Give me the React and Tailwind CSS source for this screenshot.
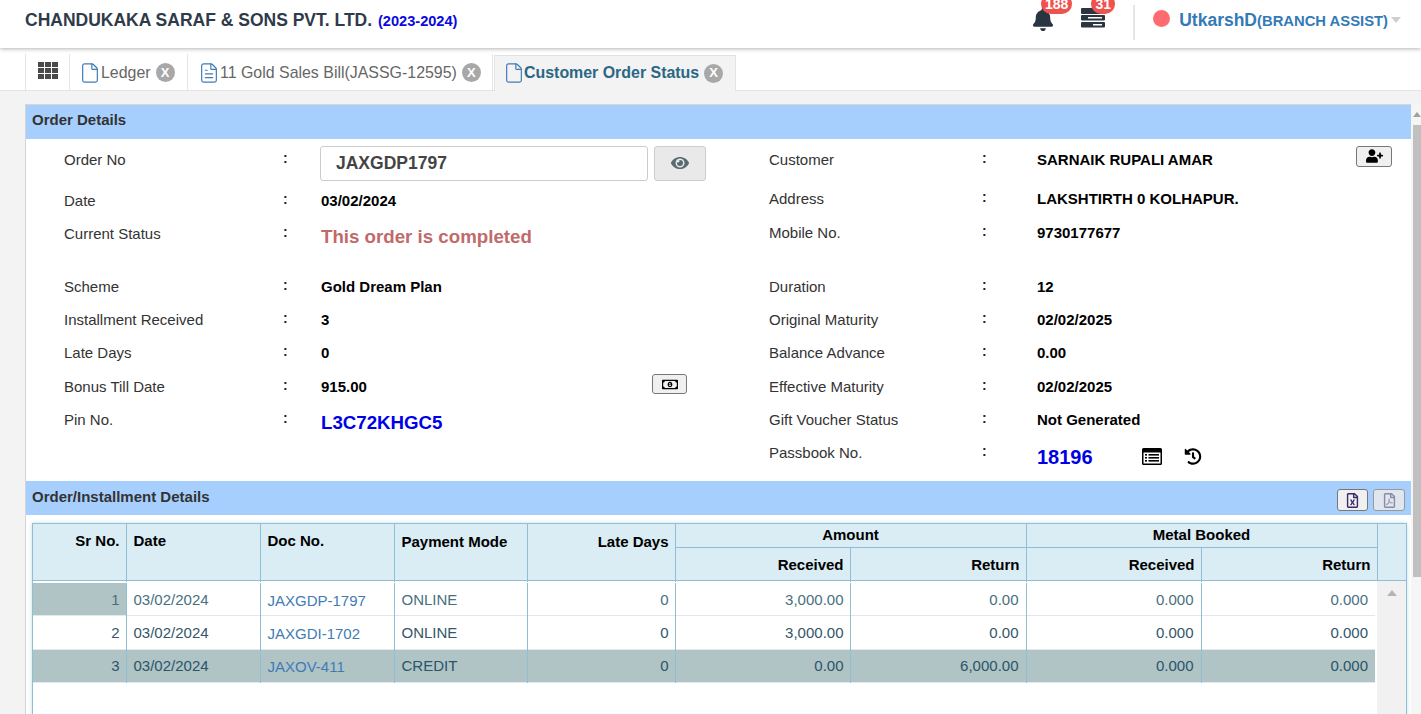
import React from "react";
import { FaBell, FaEye, FaUserPlus, FaRegMoneyBillAlt, FaHistory, FaRegFileExcel, FaRegFilePdf } from "react-icons/fa";
import { File, FileText } from "lucide-react";

const font = { fontFamily: '"Liberation Sans", Arial, sans-serif' };

function Row({ h, label, labelW, colonW, children, mt = "" }) {
  return (
    <div className={`flex items-center ${h} ${mt}`}>
      <div className={`${labelW} text-[15px] text-[#333] shrink-0`}>{label}</div>
      <div className={`${colonW} shrink-0 text-[14px] font-bold text-[#222] -translate-y-[2px] -translate-x-[2px]`}>:</div>
      <div className="flex-1 min-w-0 text-[15px] font-bold text-black">{children}</div>
    </div>
  );
}

function LRow(p) {
  return <Row labelW="w-[221px]" colonW="w-[36px]" {...p} />;
}
function RRow(p) {
  return <Row labelW="w-[215px]" colonW="w-[53px]" {...p} />;
}

function Tab({ w, icon, label, active }) {
  return (
    <div
      className={`${w} h-[36px] flex items-center shrink-0 border-r ${
        active ? "bg-[#f3f3f3] border-t border-l -mb-px pl-[8px] pb-[1px] border-[#e3e3e3]" : "mr-px pl-[9px] pt-[1px] border-[#e5e5e5]"
      }`}
    >
      {icon}
      <span className={`text-[15.930px] whitespace-nowrap ${active ? "-ml-[1px] font-bold text-[#2a6785]" : "text-[#666]"}`}>{label}</span>
      <span className="ml-[5px] w-[19px] h-[19px] rounded-full bg-[#a8a8a8] text-white text-[13px] font-bold flex items-center justify-center shrink-0">X</span>
    </div>
  );
}

const headCols = [93, 134, 134, 133, 148, 175, 176, 175, 176];
const bodyCols = [93, 134, 134, 133, 148, 175, 176, 175, 174];
const rows = [
  ["1", "JAXGDP-1797", "ONLINE", "3,000.00", "0.00"],
  ["2", "JAXGDI-1702", "ONLINE", "3,000.00", "0.00"],
  ["3", "JAXOV-411", "CREDIT", "0.00", "6,000.00"],
];
const rowText = ["text-[#47707f]", "text-[#33566a]", "text-[#2a5568]"];

function BodyRow({ r, i }) {
  const sel = i === 2;
  const base = `text-[15px] pt-[2px] ${rowText[i]}`;
  const tdL = `border-r border-[#8fbfd4] pl-[7px] pr-[5px] ${base}`;
  const tdR = `border-r border-[#8fbfd4] pl-[5px] pr-[6px] text-right ${base}`;
  const tdR2 = `border-r border-[#8fbfd4] pl-[5px] pr-[7px] text-right ${base}`;
  return (
    <tr className={`${i === 1 ? "h-[34px]" : i === 0 ? "h-[32px]" : "h-[33px]"} ${sel ? "bg-[#b0c3c5]" : ""} border-b border-[#dfeaef]`}>
      <td className={`${tdR} ${i === 0 ? "bg-[#b0c3c5]" : ""}`}>{r[0]}</td>
      <td className={tdL}>03/02/2024</td>
      <td className={tdL}><span className="relative top-[1px] text-[#3f7cb5]">{r[1]}</span></td>
      <td className={tdL}>{r[2]}</td>
      <td className={tdR}>0</td>
      <td className={tdR}>{r[3]}</td>
      <td className={tdR2}>{r[4]}</td>
      <td className={tdR2}>0.000</td>
      <td className={`pl-[5px] pr-[7px] text-right ${base}`}>0.000</td>
    </tr>
  );
}

function Colgroup({ cols }) {
  return (
    <colgroup>
      {cols.map((c, i) => (
        <col key={i} style={{ width: c }} />
      ))}
    </colgroup>
  );
}

function GridIcon() {
  const xs = [0, 7, 14];
  const ys = [0, 6, 12];
  return (
    <svg width="20" height="17" viewBox="0 0 20 17" fill="#4a4a4a" className="-mt-[3px]">
      {ys.map((y) => xs.map((x) => <rect key={`${x}-${y}`} x={x} y={y} width="6" height="5" />))}
    </svg>
  );
}

function ListWindowIcon() {
  return (
    <svg width="20" height="17" viewBox="0 0 20 17" fill="#000">
      <path fillRule="evenodd" d="M1.5 0h17A1.5 1.5 0 0 1 20 1.500v14a1.500 1.500 0 0 1-1.500 1.500h-17A1.500 1.500 0 0 1 0 15.500v-14A1.500 1.500 0 0 1 1.500 0zM1.500 4.500v11h17v-11z" />
      <rect x="3" y="6" width="2" height="1.600" />
      <rect x="3" y="9" width="2" height="1.600" />
      <rect x="3" y="12" width="2" height="1.600" />
      <rect x="6.500" y="6" width="10.500" height="1.600" />
      <rect x="6.500" y="9" width="10.500" height="1.600" />
      <rect x="6.500" y="12" width="10.500" height="1.600" />
    </svg>
  );
}

const tabIcon = "w-[22px] h-[22px] text-[#3f7cb5] shrink-0";

export default function App() {
  const th = "border-r border-[#8fbfd4] px-[6px] text-[15px] font-bold text-black";
  const thL = "border-r border-[#8fbfd4] pl-[7px] pr-[5px] text-[15px] font-bold text-black";
  return (
    <div className="w-[1421px] h-[714px] overflow-hidden bg-[#f3f3f3] flex flex-col" style={font}>
      {/* header */}
      <header className="h-[48px] shrink-0 bg-white shadow-[0_1px_4px_rgba(0,0,0,0.3)] relative z-10 flex items-start pl-[25px]">
        <div className="pt-[7px] text-[17.5px] font-bold text-[#2f3a4a] whitespace-nowrap">
          CHANDUKAKA SARAF &amp; SONS PVT. LTD. <span className="text-[14.600px] text-[#0a0ae0] ml-[1px]">(2023-2024)</span>
        </div>
        <div className="ml-auto flex items-start h-full">
          <div className="relative mt-[8px] w-[22px] h-[22px]">
            <FaBell className="w-[22px] h-[23px] text-[#2b3542]" />
            <span className="absolute left-[9px] -top-[14px] w-[31px] h-[20px] rounded-[10px] bg-[#ef5350] text-white text-[14px] font-bold flex items-center justify-center">188</span>
          </div>
          <div className="relative ml-[27px] mt-[8px] w-[24px] h-[20px]">
            <svg viewBox="0 0 24 20" className="w-[24px] h-[20px]" fill="#2b3542">
              <rect x="0" y="0" width="24" height="6" rx="1" />
              <rect x="0" y="7" width="24" height="5.500" rx="1" />
              <rect x="0" y="14" width="24" height="5.500" rx="1" />
              <rect x="7" y="9" width="14" height="1.500" fill="#fff" />
              <rect x="12" y="16" width="9" height="1.500" fill="#fff" />
            </svg>
            <span className="absolute left-[10px] -top-[14px] w-[24px] h-[20px] rounded-[10px] bg-[#ef5350] text-white text-[14px] font-bold flex items-center justify-center">31</span>
          </div>
          <div className="ml-[28px] mt-[5px] w-[2px] h-[35px] bg-[#e6e6e6]" />
          <div className="ml-[18px] mt-[10px] w-[17px] h-[17px] rounded-full bg-[#ff6b70]" />
          <div className="ml-[9px] mt-[7px] flex items-baseline whitespace-nowrap text-[#337ab7] font-bold">
            <span className="text-[17.500px]">UtkarshD</span>
            <span className="text-[14.800px]">(BRANCH ASSIST)</span>
          </div>
          <div className="ml-[3px] mt-[17px] w-0 h-0 border-x-[5.500px] border-x-transparent border-t-[6px] border-t-[#cfcfcf] mr-[20px]" />
        </div>
      </header>

      {/* tabs */}
      <div className="h-[43px] shrink-0 bg-white border-b border-[#e3e3e3] flex items-end pl-[25px]">
        <div className="w-[45px] h-[36px] flex items-center justify-center border-x border-[#e5e5e5] shrink-0">
          <GridIcon />
        </div>
        <Tab w="w-[118px]" icon={<File className={tabIcon} strokeWidth={1.3} />} label="Ledger" />
        <Tab w="w-[304px]" icon={<FileText className={tabIcon} strokeWidth={1.3} />} label="11 Gold Sales Bill(JASSG-12595)" />
        <Tab w="w-[242px]" active icon={<File className={tabIcon} strokeWidth={1.3} />} label="Customer Order Status" />
      </div>

      {/* main */}
      <div className="flex-1 min-h-0 flex pt-[13px] pl-[25px]">
        <div className="w-[1386px] border-l border-t border-[#d5d5d5] bg-white flex flex-col">
          <div className="h-[34px] shrink-0 bg-[#a6cffe] flex items-center pl-[6px] pb-[3px] text-[15px] font-bold text-[#333]">Order Details</div>

          <div className="h-[342px] shrink-0 flex pl-[38px]">
            {/* left */}
            <div className="w-[705px] shrink-0">
              <LRow h="h-[42px]" label="Order No">
                <div className="flex items-center gap-[6px] -ml-px translate-y-[3px]">
                  <div className="w-[328px] h-[35px] border border-[#ccc] rounded-[3px] flex items-center pl-[15px] text-[17.500px] text-[#444] bg-white">JAXGDP1797</div>
                  <div className="w-[52px] h-[35px] border border-[#ccc] rounded-[3px] bg-[#e9e9e9] flex items-center justify-center">
                    <FaEye className="w-[18px] h-[18px] text-[#5a6a72]" />
                  </div>
                </div>
              </LRow>
              <LRow h="h-[40px]" label="Date">03/02/2024</LRow>
              <LRow h="h-[26px]" label="Current Status">
                <span className="text-[18.700px] text-[#c06a6a] relative top-[3px]">This order is completed</span>
              </LRow>
              <LRow h="h-[33px]" mt="mt-[24px]" label="Scheme">Gold Dream Plan</LRow>
              <LRow h="h-[33px]" label="Installment Received">3</LRow>
              <LRow h="h-[33px]" label="Late Days">0</LRow>
              <LRow h="h-[34px]" label="Bonus Till Date">
                <div className="flex items-center justify-between w-[366px]">
                  <span>915.00</span>
                  <div className="w-[35px] h-[20px] border border-[#777] rounded-[3px] bg-[#f0f0f0] flex items-center justify-center -translate-y-[3px]">
                    <FaRegMoneyBillAlt className="w-[16px] h-[15px] text-black" />
                  </div>
                </div>
              </LRow>
              <LRow h="h-[33px]" label="Pin No.">
                <span className="text-[18.700px] text-[#0000e6] relative top-[3px]">L3C72KHGC5</span>
              </LRow>
            </div>
            {/* right */}
            <div className="w-[605px] shrink-0">
              <RRow h="h-[42px]" label="Customer">
                <div className="flex items-center justify-between w-[355px]">
                  <span>SARNAIK RUPALI AMAR</span>
                  <div className="w-[36px] h-[21px] border border-[#777] rounded-[3px] bg-[#f0f0f0] flex items-center justify-center -translate-y-[4px]">
                    <FaUserPlus className="w-[17px] h-[14px] text-black" />
                  </div>
                </div>
              </RRow>
              <RRow h="h-[36px]" label="Address">LAKSHTIRTH 0 KOLHAPUR.</RRow>
              <RRow h="h-[32px]" label="Mobile No.">9730177677</RRow>
              <RRow h="h-[33px]" mt="mt-[22px]" label="Duration">12</RRow>
              <RRow h="h-[33px]" label="Original Maturity">02/02/2025</RRow>
              <RRow h="h-[33px]" label="Balance Advance">0.00</RRow>
              <RRow h="h-[34px]" label="Effective Maturity">02/02/2025</RRow>
              <RRow h="h-[33px]" label="Gift Voucher Status">Not Generated</RRow>
              <RRow h="h-[33px]" label="Passbook No.">
                <div className="flex items-center relative top-[3px]">
                  <span className="text-[20px] text-[#0000e6] w-[105px]">18196</span>
                  <ListWindowIcon />
                  <FaHistory className="w-[18px] h-[17px] text-black ml-[22px]" />
                </div>
              </RRow>
            </div>
          </div>

          <div className="h-[34px] shrink-0 bg-[#a6cffe] flex items-center pl-[6px] pr-[6px] text-[15px] font-bold text-[#333]">
            <span className="-translate-y-[1px]">Order/Installment Details</span>
            <div className="ml-auto flex gap-[5px] pt-[4px]">
              <div className="w-[31px] h-[22px] border border-[#777] rounded-[3px] bg-[#f0f0f0] flex items-center justify-center">
                <FaRegFileExcel className="w-[13px] h-[15px] text-[#3a2a6a]" />
              </div>
              <div className="w-[32px] h-[22px] border border-[#999] rounded-[3px] bg-[#e0e6ee] flex items-center justify-center">
                <FaRegFilePdf className="w-[13px] h-[15px] text-[#8a8aa8]" />
              </div>
            </div>
          </div>

          {/* grid */}
          <div className="flex-1 min-h-0 pl-[6px] pt-[8px] pr-[4px]">
            <div className="w-[1375px] h-[300px] border border-[#8fbfd4] shadow-[0_0_4px_rgba(143,191,212,0.5)]">
              <div className="flex h-[57px] bg-[#daecf4] border-b border-[#8fbfd4]">
                <table className="w-[1344px] table-fixed border-collapse shrink-0">
                  <Colgroup cols={headCols} />
                  <thead>
                    <tr className="h-[21px]">
                      <th rowSpan={2} className={`${th} text-right align-top pt-[6px]`}>Sr No.</th>
                      <th rowSpan={2} className={`${thL} text-left align-top pt-[6px]`}>Date</th>
                      <th rowSpan={2} className={`${thL} text-left align-top pt-[6px]`}>Doc No.</th>
                      <th rowSpan={2} className={`${thL} text-left align-top pt-[7px]`}>Payment Mode</th>
                      <th rowSpan={2} className={`${th} text-right align-top pt-[7px]`}>Late Days</th>
                      <th colSpan={2} className={`${th} text-center border-b`}>Amount</th>
                      <th colSpan={2} className={`${th} text-center border-b`}>Metal Booked</th>
                    </tr>
                    <tr className="h-[35px]">
                      <th className={`${th} text-right`}>Received</th>
                      <th className={`${th} text-right`}>Return</th>
                      <th className={`${th} text-right`}>Received</th>
                      <th className={`${th} text-right`}>Return</th>
                    </tr>
                  </thead>
                </table>
              </div>
              <div className="flex h-[241px] pt-[2px]">
                <table className="w-[1342px] h-[99px] table-fixed border-collapse shrink-0 self-start">
                  <Colgroup cols={bodyCols} />
                  <tbody>
                    {rows.map((r, i) => (
                      <BodyRow key={i} r={r} i={i} />
                    ))}
                  </tbody>
                </table>
                <div className="ml-[2px] flex-1 -mt-[2px] bg-[#f1f1f1] flex justify-center pt-[9px]">
                  <div className="w-0 h-0 border-x-[5px] border-x-transparent border-b-[6px] border-b-[#b5b5b5]" />
                </div>
              </div>
            </div>
          </div>
        </div>

        {/* page scrollbar */}
        <div className="w-[10px] bg-[#f5f5f5] flex flex-col items-end">
          <div className="h-[21px] w-[8px] flex items-center justify-center">
            <div className="w-0 h-0 border-x-[4px] border-x-transparent border-b-[5px] border-b-[#a0a0a0]" />
          </div>
          <div className="w-[8px] h-[452px] bg-[#c0c0c0]" />
        </div>
      </div>
    </div>
  );
}
